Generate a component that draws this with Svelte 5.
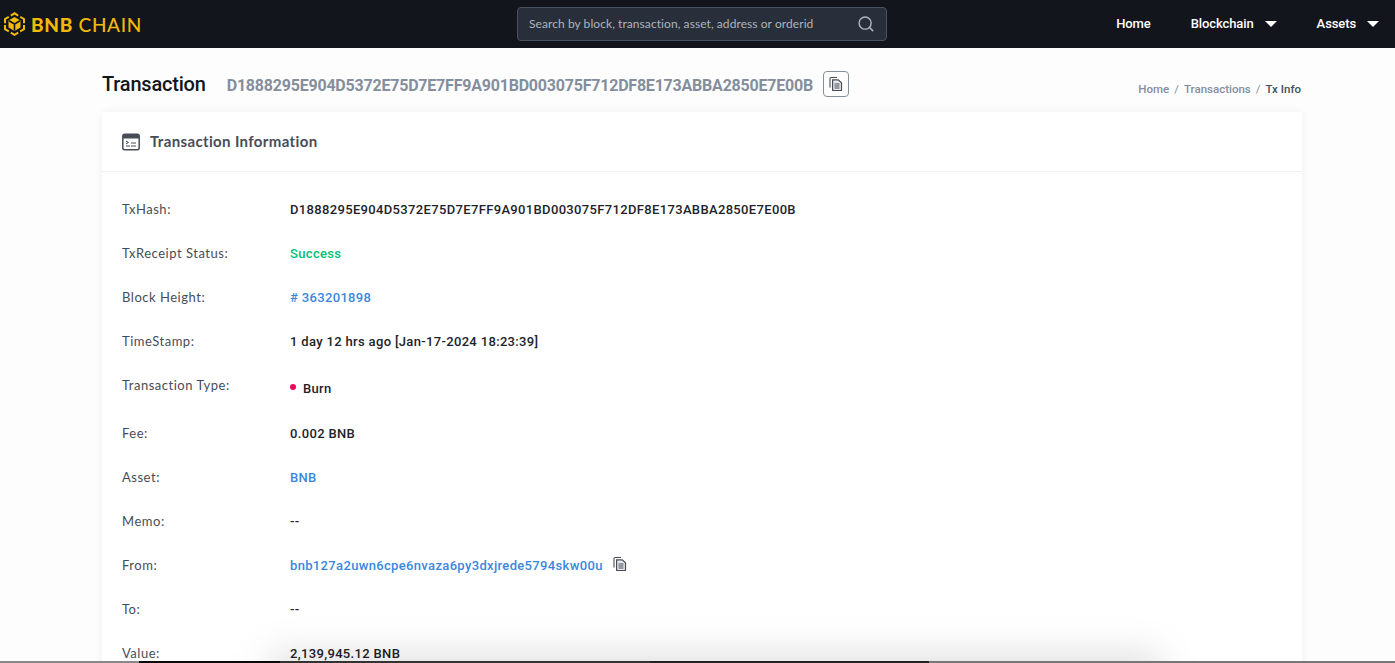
<script>
	const rows = [
		{ label: 'TxHash:', value: 'D1888295E904D5372E75D7E7FF9A901BD003075F712DF8E173ABBA2850E7E00B' },
		{ label: 'TxReceipt Status:', value: 'Success', kind: 'success' },
		{ label: 'Block Height:', value: '# 363201898', kind: 'link' },
		{ label: 'TimeStamp:', value: '1 day 12 hrs ago [Jan-17-2024 18:23:39]' },
		{ label: 'Transaction Type:', value: 'Burn', kind: 'type' },
		{ label: 'Fee:', value: '0.002 BNB', tall: true },
		{ label: 'Asset:', value: 'BNB', kind: 'link' },
		{ label: 'Memo:', value: '--' },
		{ label: 'From:', value: 'bnb127a2uwn6cpe6nvaza6py3dxjrede5794skw00u', kind: 'link', copy: true },
		{ label: 'To:', value: '--' },
		{ label: 'Value:', value: '2,139,945.12 BNB' }
	];
</script>

{#snippet copyIcon()}
	<svg class="copy-icon" viewBox="0 0 16 16" width="16" height="16" aria-hidden="true">
		<path d="M2 11.500V2.500a1 1 0 0 1 1-1h6" fill="none" stroke="currentColor" stroke-width="1.100" />
		<path d="M4.600 3.800h5.600l3.300 3v7.700H4.600z" fill="#e6e8ea" stroke="currentColor" stroke-width="1.200" />
		<path d="M6.500 8h5M6.500 10h5M6.500 12h5" stroke="currentColor" stroke-width="1.100" />
	</svg>
{/snippet}

<div class="page">
	<header class="topbar">
		<a class="logo" href="#top">
			<svg viewBox="0 0 21 24" width="21" height="24" aria-hidden="true">
				<g fill="none" stroke="#f0b90b" stroke-width="2" stroke-linejoin="miter">
					<path d="M6.800 3.600 10.500 1.300l3.700 2.300" />
					<path d="M16.200 4.800 20 7v4.200" />
					<path d="M1 11.200V7l3.800-2.200" />
					<path d="M1 13v4.200l3.800 2.200" />
					<path d="M20 13v4.200l-3.800 2.200" />
					<path d="M6.800 20.600l3.700 2.200 3.700-2.200" />
				</g>
				<path d="M10.500 5 16.500 8.500v7l-6 3.500-6-3.500v-7z" fill="#f0b90b" />
				<path d="M5 8.800l5.500 3.200L16 8.800M10.500 12v6.800" fill="none" stroke="#12161c" stroke-width="1.600" />
			</svg>
			<span class="wordmark"><b>BNB</b> CHAIN</span>
		</a>
		<div class="search">
			<span>Search by block, transaction, asset, address or orderid</span>
			<svg viewBox="0 0 18 18" width="16" height="16" aria-hidden="true">
				<circle cx="8" cy="8" r="6.800" fill="none" stroke="#aeb4bc" stroke-width="1.600" />
				<path d="M13 13l3.500 3.500" stroke="#aeb4bc" stroke-width="1.800" stroke-linecap="round" />
			</svg>
		</div>
		<nav class="nav">
			<a href="#top">Home</a>
			<a href="#top" class="drop">Blockchain<i></i></a>
			<a href="#top" class="drop">Assets<i></i></a>
		</nav>
	</header>

	<main class="content">
		<div class="title-row">
			<h1>Transaction</h1>
			<span class="hash">D1888295E904D5372E75D7E7FF9A901BD003075F712DF8E173ABBA2850E7E00B</span>
			<button class="copy-btn" type="button" aria-label="Copy">{@render copyIcon()}</button>
			<div class="crumbs">
				<a href="#top">Home</a><em>/</em><a href="#top">Transactions</a><em>/</em><strong>Tx Info</strong>
			</div>
		</div>

		<section class="card">
			<div class="card-head">
				<svg viewBox="0 0 18 18" width="18" height="18" aria-hidden="true">
					<rect x="0.800" y="1.200" width="16.400" height="15.600" rx="2" fill="none" stroke="#474d57" stroke-width="1.500" />
					<path d="M1 3a2 2 0 0 1 2-2h12a2 2 0 0 1 2 2v2.500H1z" fill="#474d57" />
					<path d="M4 8l2.500 1.500L4 11M4 13h4M9 10h5M9 13h5" fill="none" stroke="#474d57" stroke-width="1" />
				</svg>
				<h2>Transaction Information</h2>
			</div>
			<dl class="rows">
				{#each rows as row}
					<div class="row" class:tall={row.tall}>
						<dt>{row.label}</dt>
						<dd class={row.kind}>
							{#if row.kind === 'type'}<i class="dot"></i>{/if}
							{row.value}
							{#if row.copy}{@render copyIcon()}{/if}
						</dd>
					</div>
				{/each}
			</dl>
		</section>
	</main>
	<div class="bottom-shade"></div>
	<div class="bottom-strip"></div>
</div>

<style>
	:global(body) {
		margin: 0;
		background: #fff;
	}

	.page {
		position: relative;
		height: 663px;
		overflow: hidden;
		font-family: 'Lato', 'Liberation Sans', sans-serif;
		color: #1e2329;
		background: #fdfdfd;
	}

	a {
		color: inherit;
		text-decoration: none;
	}

	.topbar {
		display: flex;
		align-items: center;
		height: 48px;
		background: #12161c;
		color: #fff;
	}

	.logo {
		display: flex;
		align-items: center;
		gap: 6px;
		width: 517px;
		padding-left: 4px;
		box-sizing: border-box;
		color: #f0b90b;
	}

	.wordmark {
		font-size: 19px;
		font-weight: 500;
		letter-spacing: 0.7px;
	}

	.wordmark b {
		font-weight: 900;
	}

	.search {
		display: flex;
		align-items: center;
		justify-content: space-between;
		box-sizing: border-box;
		width: 370px;
		height: 34px;
		padding: 0 12px 0 11px;
		background: #282f3b;
		border: 1px solid #4a5361;
		border-radius: 4px;
		color: #aeb4bc;
		font-size: 12px;
		letter-spacing: 0.07px;
	}

	.search span {
		margin-top: -1px;
	}

	.nav {
		display: flex;
		align-items: center;
		gap: 40px;
		margin-left: auto;
		padding-right: 16px;
		margin-top: -1px;
		font-family: 'Roboto', sans-serif;
		font-size: 13px;
		font-weight: 500;
		letter-spacing: -0.1px;
	}

	.drop {
		display: flex;
		align-items: center;
		gap: 11px;
	}

	.drop i {
		width: 0;
		height: 0;
		border-left: 6px solid transparent;
		border-right: 6px solid transparent;
		border-top: 6px solid #fff;
	}

	.content {
		width: 1200px;
		margin-left: 102px;
	}

	.title-row {
		display: flex;
		align-items: center;
		box-sizing: border-box;
		height: 64px;
		padding-top: 8px;
		font-family: 'Roboto', sans-serif;
	}

	h1 {
		margin: 0;
		font-size: 20px;
		font-weight: 500;
		letter-spacing: -0.2px;
		color: #12161c;
	}

	.hash {
		margin: 3px 0 0 21px;
		font-size: 16px;
		font-weight: 700;
		letter-spacing: -0.21px;
		color: #848e9c;
	}

	.copy-btn {
		display: flex;
		align-items: center;
		justify-content: center;
		width: 26px;
		height: 26px;
		margin-left: 10px;
		padding: 0;
		background: #fff;
		border: 1px solid #848e9c;
		border-radius: 4px;
		color: #474d57;
	}

	.crumbs {
		display: flex;
		gap: 5px;
		margin: 10px 0 0 auto;
		padding-right: 1px;
		font-size: 11.5px;
		font-weight: 500;
		color: #848e9c;
	}

	.crumbs em {
		font-style: normal;
		font-weight: 400;
	}

	.crumbs strong {
		font-weight: 500;
		color: #474d57;
	}

	.card {
		background: #fff;
		box-shadow: 0 0 8px rgba(0, 0, 0, 0.06);
		border-radius: 2px;
	}

	.card-head {
		display: flex;
		align-items: center;
		gap: 10px;
		height: 59px;
		padding-left: 20px;
		border-bottom: 1px solid #f1f1f2;
	}

	h2 {
		margin: -1px 0 0;
		font-size: 15px;
		font-weight: 700;
		letter-spacing: 0.36px;
		color: #474d57;
	}

	.rows {
		margin: 0;
		padding: 15px 20px 0;
	}

	.row {
		display: flex;
		align-items: center;
		height: 44px;
		font-size: 13px;
	}

	.row.tall {
		margin-top: 4px;
	}

	dt {
		width: 168px;
		letter-spacing: 0.52px;
		color: #474d57;
	}

	dd {
		display: flex;
		align-items: center;
		margin: 0;
		font-family: 'Roboto', sans-serif;
		font-weight: 500;
		letter-spacing: 0.34px;
		color: #1e2329;
	}

	.link {
		color: #3b87e0;
	}

	.success {
		color: #02c076;
	}

	.type {
		margin-top: 6px;
	}

	.dot {
		width: 6px;
		height: 6px;
		margin: -3px 7px 0 0;
		background: #f0035c;
		border-radius: 50%;
	}

	dd .copy-icon {
		margin: -2px 0 0 9px;
		color: #474d57;
	}

	.bottom-shade {
		position: absolute;
		left: 270px;
		right: 235px;
		bottom: -30px;
		height: 40px;
		background: rgba(0, 0, 0, 0.12);
		filter: blur(18px);
	}

	.bottom-strip {
		position: absolute;
		left: 0;
		right: 0;
		bottom: 0;
		height: 2px;
		background: linear-gradient(to right, #888 0 139px, #0a0a0a 139px 280px, #333 280px 650px, #222 650px 929px, #777 929px);
	}
</style>
